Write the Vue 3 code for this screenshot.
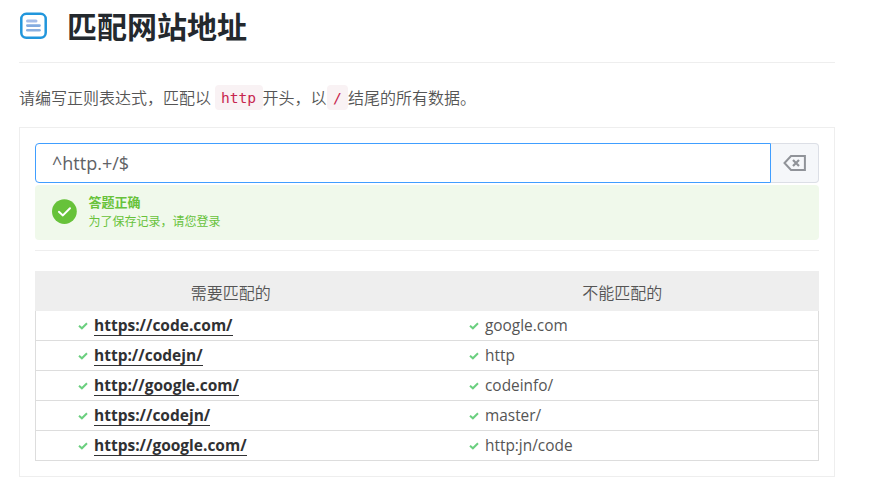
<script setup>
const rows = [
  ['https://code.com/', 'google.com'],
  ['http://codejn/', 'http'],
  ['http://google.com/', 'codeinfo/'],
  ['https://codejn/', 'master/'],
  ['https://google.com/', 'http:jn/code'],
]
</script>

<template>
  <main class="page">
    <header class="head">
      <svg class="logo" viewBox="0 0 28 28">
        <rect x="2.300" y="1.800" width="24.400" height="24" rx="5" fill="#fff" stroke="#2196dc" stroke-width="2.500" />
        <path d="M8.500 9.100H17" stroke="#a5bde9" stroke-width="3" stroke-linecap="round" />
        <path d="M8.300 13.600H20.500" stroke="#83abe0" stroke-width="2.600" stroke-linecap="round" />
        <path d="M8.300 18.200H20.500" stroke="#8aafe0" stroke-width="2.600" stroke-linecap="round" />
      </svg>
      <h1>匹配网站地址</h1>
    </header>

    <p class="question">请编写正则表达式，匹配以 <code>http</code>开头，以<code>/</code>结尾的所有数据。</p>

    <section class="panel">
      <div class="field">
        <div class="input">^http.+/$</div>
        <button class="clear" aria-label="clear">
          <svg viewBox="0 0 24 18">
            <path d="M8 2H21.900V16H8L1.500 9Z" fill="none" stroke="#909399" stroke-width="2" />
            <path d="M10 6L16 12M16 6L10 12" stroke="#909399" stroke-width="2.200" />
          </svg>
        </button>
      </div>

      <div class="alert">
        <svg class="ok" viewBox="0 0 26 26">
          <circle cx="13.400" cy="12.600" r="12.400" fill="#67c23a" />
          <path d="M7.900 12.800L11.900 16.400L19 9.300" fill="none" stroke="#fff" stroke-width="2" stroke-linecap="round" stroke-linejoin="round" />
        </svg>
        <div>
          <div class="alert-title">答题正确</div>
          <div class="alert-text">为了保存记录，请您登录</div>
        </div>
      </div>

      <div class="rule"></div>

      <div class="table">
        <div class="thead">
          <span>需要匹配的</span>
          <span>不能匹配的</span>
        </div>
        <div v-for="row in rows" :key="row[0]" class="row">
          <div v-for="(text, i) in row" :key="i" class="cell">
            <svg class="tick" viewBox="0 0 10 8">
              <path d="M1 3.700L3.900 6.300L9 1.300" fill="none" stroke="#6bcf7f" stroke-width="2" />
            </svg>
            <span :class="i === 0 ? 'match' : 'plain'">{{ text }}</span>
          </div>
        </div>
      </div>
    </section>
  </main>
</template>

<style>
body {
  background: #fff;
}
</style>

<style scoped>
.page {
  box-sizing: border-box;
  width: 835px;
  height: 488px;
  padding-left: 19px;
  font-family: "Open Sans", "Noto Sans CJK SC", sans-serif;
  font-size: 16px;
  color: #555;
}
.page * {
  box-sizing: border-box;
}
.head {
  display: flex;
  height: 63px;
  border-bottom: 1px solid #eee;
}
.logo {
  width: 28px;
  height: 28px;
  margin-top: 12px;
}
h1 {
  margin: 0 0 0 20px;
  font: 700 30px/50px "Noto Sans CJK SC", sans-serif;
  color: #24292e;
}
.question {
  margin: 22px 0 17px;
  height: 25px;
  font: 350 16px/24px "Noto Sans CJK SC", sans-serif;
  white-space: nowrap;
}
code {
  display: inline-block;
  height: 25px;
  padding: 0 6.4px;
  border-radius: 4px;
  background: #f9f2f4;
  color: #c7254e;
  font: 14.600px/26px "DejaVu Sans Mono", monospace;
  vertical-align: top;
}
.panel {
  height: 350px;
  padding: 15px;
  border: 1px solid #eee;
}
.field {
  display: flex;
  height: 40px;
}
.input {
  width: 736px;
  padding-left: 16px;
  border: 1px solid #409eff;
  border-radius: 4px 0 0 4px;
  font-size: 18px;
  line-height: 38px;
  color: #606266;
}
.clear {
  display: flex;
  flex: 1;
  align-items: center;
  justify-content: center;
  padding: 0;
  border: 1px solid #dcdfe6;
  border-left: 0;
  border-radius: 0 4px 4px 0;
  background: #f5f7fa;
}
.clear svg {
  width: 24px;
  height: 18px;
}
.alert {
  display: flex;
  height: 55px;
  margin-top: 2px;
  padding: 7px 16px;
  border-radius: 4px;
  background: #f0f9eb;
  color: #67c23a;
  font-family: "Noto Sans CJK SC", sans-serif;
}
.ok {
  width: 26px;
  height: 26px;
  margin: 7px 11.5px 0 0;
}
.alert-title {
  font-size: 13px;
  font-weight: 700;
  line-height: 19px;
}
.alert-text {
  font-size: 12px;
  line-height: 20px;
}
.rule {
  height: 1px;
  margin: 10px 0 20px;
  background: #eee;
}
.thead {
  display: grid;
  grid-template-columns: 1fr 1fr;
  height: 40px;
  padding-right: 1px;
  background: #eee;
  font-family: "Noto Sans CJK SC", sans-serif;
  font-weight: 350;
  line-height: 42px;
  text-align: center;
}
.row {
  display: grid;
  grid-template-columns: 391px 1fr;
  height: 30px;
  border: 1px solid #ddd;
  border-top: 0;
}
.cell {
  display: flex;
  align-items: center;
  padding-left: 42px;
}
.tick {
  width: 10px;
  height: 8px;
  margin: 0 6px 0 0;
}
.match {
  border-bottom: 1px solid #303133;
  font-size: 15.500px;
  font-weight: 700;
  line-height: 19px;
  color: #303133;
}
.plain {
  font-size: 15.400px;
  line-height: 22px;
}
</style>
